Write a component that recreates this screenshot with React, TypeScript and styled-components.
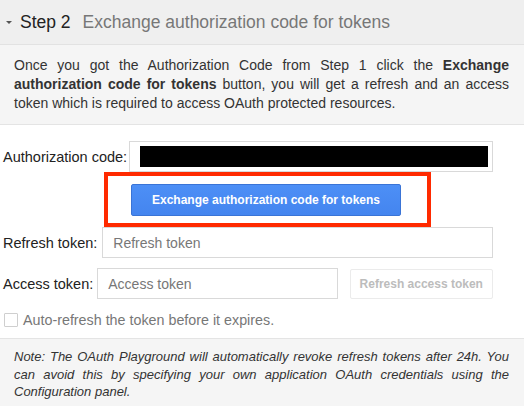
import React from "react";
import styled, { createGlobalStyle } from "styled-components";

const GlobalStyle = createGlobalStyle`
  html, body { margin: 0; padding: 0; background: #ffffff; }
  body { font-family: "Liberation Sans", Arial, sans-serif; color: #222; }
`;

const Panel = styled.div`
  width: 524px;
  height: 406px;
  display: flex;
  flex-direction: column;
  overflow: hidden;
`;

const Header = styled.div`
  height: 45px;
  box-sizing: border-box;
  background: #efefef;
  border-bottom: 1px solid #e2e2e2;
  display: flex;
  align-items: center;
  padding-left: 6px;
`;

const Caret = styled.span`
  width: 0;
  height: 0;
  border-left: 3.5px solid transparent;
  border-right: 3.5px solid transparent;
  border-top: 3.5px solid #555;
  margin-right: 8px;
  margin-top: 1px;
`;

const StepLabel = styled.span`
  font-size: 17.5px;
  color: #222;
  margin-right: 12px;
`;

const StepTitle = styled.span`
  font-size: 17.5px;
  color: #777;
`;

const Description = styled.div`
  background: #f5f5f5;
  border-bottom: 1px solid #e4e4e4;
  padding: 11px 15px 11px 14px;
  font-size: 14px;
  line-height: 19px;
  color: #333;
  text-align: justify;
  b { color: #333; }
`;

const Form = styled.div`
  flex: 1;
  display: flex;
  flex-direction: column;
  padding: 16px 31px 0 3px;
`;

const Row = styled.div<{ $gap?: number }>`
  display: flex;
  align-items: center;
  margin-top: ${(p) => p.$gap ?? 0}px;
`;

const Label = styled.span<{ $gap: number }>`
  font-size: 14.5px;
  color: #222;
  margin-right: ${(p) => p.$gap}px;
  white-space: nowrap;
`;

const Field = styled.div<{ $width?: number }>`
  box-sizing: border-box;
  height: 31px;
  min-width: 0;
  ${(p) => (p.$width ? `width: ${p.$width}px;` : "flex: 1;")}
  border: 1px solid #d9d9d9;
  background: #fff;
  display: flex;
  align-items: center;
  padding: 0 10px;
  font-size: 14px;
  color: #777;
`;

const Redacted = styled.span`
  display: block;
  flex: 1;
  height: 21px;
  margin-right: -6px;
  background: #000;
`;

const FrameRow = styled.div`
  display: flex;
  padding-left: 101px;
`;

const RedFrame = styled.div`
  box-sizing: border-box;
  width: 327px;
  height: 55px;
  border: 4px solid #ff2a00;
  padding: 8px 0 0 23px;
`;

const PrimaryButton = styled.button`
  box-sizing: border-box;
  width: 270px;
  height: 32px;
  border: 1px solid #3a74d6;
  border-radius: 2px;
  background: linear-gradient(#4d8ff6, #4485ef);
  color: #fff;
  font-family: "Liberation Sans", Arial, sans-serif;
  font-weight: bold;
  font-size: 12px;
  padding: 0;
`;

const GhostButton = styled.button`
  box-sizing: border-box;
  width: 144px;
  height: 30px;
  margin-left: 12px;
  border: 1px solid #ebebeb;
  border-radius: 2px;
  background: #fff;
  color: #bcbcbc;
  font-family: "Liberation Sans", Arial, sans-serif;
  font-weight: bold;
  font-size: 12px;
  padding: 0;
`;

const CheckRow = styled.label`
  display: flex;
  align-items: center;
  margin-top: 13px;
  padding-left: 1px;
  font-size: 14.3px;
  color: #777;
`;

const CheckBox = styled.span`
  box-sizing: border-box;
  width: 14px;
  height: 14px;
  border: 1px solid #cfcfcf;
  border-radius: 1px;
  background: #fff;
  margin-right: 5px;
`;

const Note = styled.div`
  height: 68px;
  box-sizing: border-box;
  background: #f5f5f5;
  border-top: 1px solid #e4e4e4;
  padding: 9px 15px 0 14px;
  font-size: 13px;
  line-height: 17.5px;
  font-style: italic;
  color: #333;
  text-align: justify;
`;

export default function App() {
  return (
    <>
      <GlobalStyle />
      <Panel>
        <Header>
          <Caret />
          <StepLabel>Step 2</StepLabel>
          <StepTitle>Exchange authorization code for tokens</StepTitle>
        </Header>
        <Description>
          Once you got the Authorization Code from Step 1 click the{" "}
          <b>Exchange authorization code for tokens</b> button, you will get a
          refresh and an access token which is required to access OAuth
          protected resources.
        </Description>
        <Form>
          <Row>
            <Label $gap={2}>Authorization code:</Label>
            <Field>
              <Redacted />
            </Field>
          </Row>
          <FrameRow>
            <RedFrame>
              <PrimaryButton>Exchange authorization code for tokens</PrimaryButton>
            </RedFrame>
          </FrameRow>
          <Row>
            <Label $gap={5}>Refresh token:</Label>
            <Field>Refresh token</Field>
          </Row>
          <Row $gap={10}>
            <Label $gap={4}>Access token:</Label>
            <Field $width={241}>Access token</Field>
            <GhostButton>Refresh access token</GhostButton>
          </Row>
          <CheckRow>
            <CheckBox />
            Auto-refresh the token before it expires.
          </CheckRow>
        </Form>
        <Note>
          Note: The OAuth Playground will automatically revoke refresh tokens
          after 24h. You can avoid this by specifying your own application OAuth
          credentials using the Configuration panel.
        </Note>
      </Panel>
    </>
  );
}
